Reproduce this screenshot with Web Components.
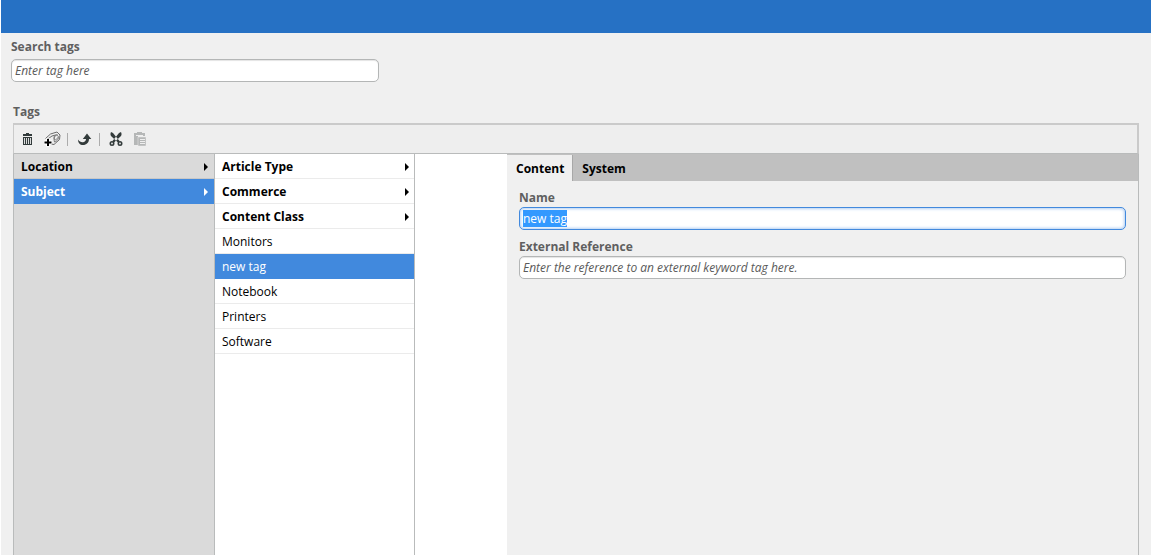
<!DOCTYPE html>
<html lang="en">
<head>
<meta charset="utf-8">
<title>Tags</title>
<style>
  body { margin: 0; background: #fff; font: 12px/16px "Open Sans", "Noto Sans", sans-serif; color: #000; }
</style>
</head>
<body>
<tag-app>
  <text-field class="search" label="Search tags" placeholder="Enter tag here"></text-field>
  <tag-manager heading="Tags">
    <tag-toolbar slot="toolbar"></tag-toolbar>
    <tag-column slot="columns" class="root">
      <tag-item parent>Location</tag-item>
      <tag-item parent selected>Subject</tag-item>
    </tag-column>
    <tag-column slot="columns">
      <tag-item parent>Article Type</tag-item>
      <tag-item parent>Commerce</tag-item>
      <tag-item parent>Content Class</tag-item>
      <tag-item>Monitors</tag-item>
      <tag-item selected>new tag</tag-item>
      <tag-item>Notebook</tag-item>
      <tag-item>Printers</tag-item>
      <tag-item>Software</tag-item>
    </tag-column>
    <tab-panel slot="detail" tabs="Content,System">
      <text-field id="name" label="Name" value="new tag" active></text-field>
      <text-field label="External Reference" placeholder="Enter the reference to an external keyword tag here."></text-field>
    </tab-panel>
  </tag-manager>
</tag-app>
<script>
const define = (name, render, ready) => customElements.define(name, class extends HTMLElement {
  connectedCallback() {
    if (this.shadowRoot) return;
    this.attachShadow({ mode: 'open' }).innerHTML = render(this);
    if (ready) ready(this, this.shadowRoot);
  }
});

define('tag-app', () => `
  <style>
    :host { display: flex; flex-direction: column; min-height: 100vh; margin: 0 2px 0 1px; background: #f0f0f0; }
    header { height: 33px; background: #2671c4; }
    main { flex: 1; display: flex; flex-direction: column; gap: 22px; padding-top: 6px; }
    ::slotted(.search) { --label-gap: 4px; width: 32%; margin-left: 10px; }
    ::slotted(tag-manager) { flex: 1; margin: 0 12px; }
  </style>
  <header></header>
  <main><slot></slot></main>`);

define('text-field', h => `
  <style>
    :host { display: block; }
    label { display: block; margin-bottom: var(--label-gap, 1px); font-weight: bold; color: #5f5f5f; }
    input { display: block; box-sizing: border-box; width: 100%; height: 23px; padding: 0 3px; border: 1px solid #b4b6b6; border-radius: 5px;
      background: #fff; box-shadow: inset 0 1px 1px #e4e4e4; font: inherit; color: #000; outline: none; }
    input::placeholder { color: #5a5a5a; font-style: italic; opacity: 1; }
    input::selection { background: #3399ff; color: #fff; }
    :host([active]) input { border-color: #4289dd; box-shadow: inset 0 0 3px 1px #b3cff2; }
  </style>
  <label for="field">${h.getAttribute('label')}</label>
  <input id="field" type="text" value="${h.getAttribute('value') || ''}" placeholder="${h.getAttribute('placeholder') || ''}">`,
  (h, root) => {
    if (h.hasAttribute('active')) { const i = root.querySelector('input'); i.focus(); i.select(); }
  });

define('tag-manager', h => `
  <style>
    :host { display: flex; flex-direction: column; }
    h2 { margin: 0 0 3px; font-size: 12px; line-height: 16px; color: #5f5f5f; }
    .body { flex: 1; display: flex; background: #fff; border: solid #b9bbbb; border-width: 0 1px; }
    .space { flex: 92; }
    .detail { flex: 631; display: flex; }
    .detail ::slotted(*) { flex: 1; }
  </style>
  <h2>${h.getAttribute('heading')}</h2>
  <slot name="toolbar"></slot>
  <div class="body">
    <slot name="columns"></slot>
    <div class="space"></div>
    <div class="detail"><slot name="detail"></slot></div>
  </div>`);

define('tag-toolbar', () => `
  <style>
    :host { display: flex; align-items: center; box-sizing: border-box; height: 31px; padding: 0 4px;
      background: #eee; border: solid #cacaca; border-width: 2px 2px 1px 1px; border-bottom-color: #b9bbbb; }
    button { width: 18px; height: 18px; margin: 0 0 0 7px; padding: 0; border: 0; background: none; color: #333b3b; }
    button:first-of-type { margin: 0; }
    button:disabled { color: #b5b7b7; }
    svg { display: block; width: 18px; height: 18px; }
    i { width: 1px; height: 13px; margin-left: 6px; background: #acacac; }
  </style>
  <button aria-label="Delete"><svg viewBox="0 0 18 18" fill="currentColor"><path d="M8 3h3v1h3v2H5V4h3zM5 7h9v8H5z"/><path d="M6.500 8v6M8.500 8v6M10.500 8v6M12.500 8v6" stroke="#eee" stroke-width=".9"/></svg></button>
  <button aria-label="Create tag"><svg viewBox="0 0 18 18" fill="none" stroke="#6c6c6c"><path d="M2.500 8.500 7.500 4 14 2 17 5 16.500 9.500 11 14.500 8 14M4 9.500 9 6 12.500 5"/><path d="M14.500 4.500c-3 1-4 4-3 7.500 3-1 5-4 3.500-6s-4-1-4 2 3 2 3.500-.5" stroke="#777"/><path d="M5 8.500v8M1 12.500h8" stroke="#fff" stroke-width="4"/><path d="M5 9v7M1.500 12.500h7" stroke="#000" stroke-width="2"/></svg></button>
  <i></i>
  <button aria-label="Reload"><svg viewBox="0 0 18 18" fill="currentColor"><path d="m12 3.500 4.300 5.500H14c0 3.500-2.500 6-6 6-3 0-5-2-5-5.500 1.500 2.500 4 3.300 5.800 2.500C10.300 11.300 11 10.500 11 9H7.800z"/></svg></button>
  <i></i>
  <button aria-label="Cut"><svg viewBox="0 0 18 18"><g fill="none" stroke="currentColor" stroke-width="1.600"><circle cx="5" cy="13.500" r="1.700"/><circle cx="13" cy="13.500" r="1.700"/></g><path d="M4 2c-1 2-.5 3.500.5 4.500l7 6.500 1-2L6 3zM14 2c1 2 .5 3.500-.5 4.500l-7 6.500-1-2L12 3z" fill="currentColor"/></svg></button>
  <button aria-label="Paste" disabled><svg viewBox="0 0 18 18" fill="currentColor"><path d="M2 3h3V2h5v1h3v3h-1V5H4v9h1v1H2z"/><path d="M3 3h9v3H6v9H3z"/><path d="M4 5.500h7" stroke="#eee"/><path d="M6 7h8v9H6z" stroke="#eee" stroke-width=".5"/><path d="M8 9.500h5M8 11.500h5M8 13.500h5" stroke="#eee"/></svg></button>`);

define('tag-column', () => `
  <style>
    :host { display: block; box-sizing: border-box; flex: none; width: 200px; border-right: 1px solid #b9bbbb; }
    :host(.root) { width: 201px; background: #dadada; --rule: #c8c8c8; --item-end: 6px; }
  </style>
  <slot></slot>`);

define('tag-item', h => `
  <style>
    :host { display: block; }
    button { display: flex; align-items: center; justify-content: space-between; box-sizing: border-box; width: 100%; height: 25px;
      padding: 2px var(--item-end, 5px) 0 7px; border: 0; border-bottom: 1px solid var(--rule, #ebebeb); background: none; font: inherit; color: #000; text-align: left; }
    :host([parent]) button { font-weight: bold; }
    :host([selected]) button { background: #4189dd; border-color: #4189dd; color: #fff; }
    svg { display: block; width: 4px; height: 8px; }
  </style>
  <button><slot></slot>${h.hasAttribute('parent') ? '<svg viewBox="0 0 4 8" fill="currentColor"><path d="m0 0 4 4-4 4z"/></svg>' : ''}</button>`);

define('tab-panel', h => `
  <style>
    :host { display: block; background: #f0f0f0; }
    nav { display: flex; height: 26px; padding-top: 1px; background: #c0c0c0; }
    button { padding: 2px 8px 0 9px; border: 0; background: none; font: inherit; font-weight: bold; color: #000; }
    button[aria-selected=true] { background: #f0f0f0; border-right: 1px solid #a8a8a8; }
    section { display: flex; flex-direction: column; gap: 9px; padding: 9px 12px; }
  </style>
  <nav role="tablist">${h.getAttribute('tabs').split(',').map((t, i) => `<button role="tab" aria-selected="${i === 0}">${t}</button>`).join('')}</nav>
  <section><slot></slot></section>`);
</script>
</body>
</html>
